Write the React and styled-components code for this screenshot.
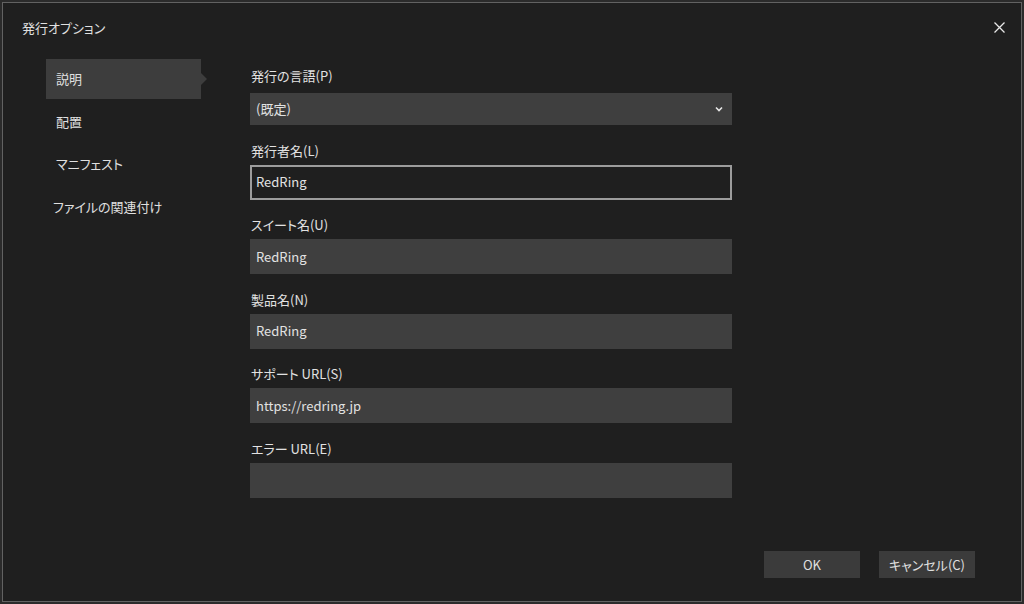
import React from "react"
import styled, { createGlobalStyle } from "styled-components"

const GlobalStyle = createGlobalStyle`
  html, body {
    margin: 0;
    padding: 0;
    background: #2b2b2b;
  }
  body {
    font-family: "Noto Sans CJK JP", "Noto Sans", sans-serif;
    font-size: 13px;
    font-feature-settings: "palt";
  }
`

const Dialog = styled.div`
  box-sizing: border-box;
  width: 1020px;
  height: 600px;
  margin: 2px;
  border: 1px solid #626262;
  background: #1f1f1f;
  color: #e4e4e4;
  display: flex;
  flex-direction: column;
`

const Header = styled.div`
  height: 49px;
  padding: 0 16px 1px 19px;
  display: flex;
  align-items: center;
  justify-content: space-between;
  flex-shrink: 0;
`

const Title = styled.div`
  font-size: 13px;
  color: #e0e0e0;
`

const CloseButton = styled.button`
  border: none;
  background: none;
  padding: 0;
  width: 11px;
  height: 11px;
  display: flex;
  align-items: center;
  justify-content: center;
  cursor: pointer;
`

const Body = styled.div`
  display: flex;
  flex: 1;
`

const Nav = styled.nav`
  padding: 6px 0 0 43px;
  display: flex;
  flex-direction: column;
  gap: 2.5px;
  width: 155px;
`

const NavItem = styled.div`
  position: relative;
  height: 40px;
  padding-left: ${({ indent }) => indent || 10}px;
  padding-bottom: 1px;
  box-sizing: border-box;
  display: flex;
  align-items: center;
  color: #e0e0e0;
  background: ${({ active }) => (active ? "#3d3d3d" : "transparent")};

  &::after {
    content: "";
    display: ${({ active }) => (active ? "block" : "none")};
    position: absolute;
    right: -6px;
    top: 14px;
    border-left: 6px solid #3d3d3d;
    border-top: 6px solid transparent;
    border-bottom: 6px solid transparent;
  }
`

const Form = styled.div`
  margin-left: 49px;
  width: 482px;
  padding-top: 13px;
  display: flex;
  flex-direction: column;
  gap: 15.5px;
`

const Field = styled.div`
  display: flex;
  flex-direction: column;
`

const Label = styled.label`
  line-height: 20px;
  margin-bottom: ${({ gap }) => gap}px;
  padding-left: 1px;
  color: #e2e2e2;
`

const Select = styled.div`
  box-sizing: border-box;
  height: 32px;
  padding: 0 9px 1px 6px;
  background: #3f3f3f;
  display: flex;
  align-items: center;
  justify-content: space-between;
  color: #e2e2e2;
`

const Input = styled.div`
  box-sizing: border-box;
  height: 35px;
  padding-left: ${({ focused }) => (focused ? 4 : 6)}px;
  padding-bottom: 1px;
  background: ${({ focused }) => (focused ? "#1f1f1f" : "#3f3f3f")};
  border: ${({ focused }) => (focused ? "2px solid #9c9c9c" : "none")};
  display: flex;
  align-items: center;
  color: #e2e2e2;
`

const Footer = styled.div`
  display: flex;
  justify-content: flex-end;
  gap: 19px;
  padding: 0 46px 23px 0;
`

const Button = styled.button`
  width: 96px;
  height: 27px;
  border: none;
  background: #3b3b3b;
  color: #e0e0e0;
  font-family: inherit;
  font-size: 13px;
  font-feature-settings: "palt";
  padding: 0 0 1px;
`

const navItems = ["説明", "配置", "マニフェスト", "ファイルの関連付け"]

const fields = [
  { label: "発行者名(L)", value: "RedRing", focused: true },
  { label: "スイート名(U)", value: "RedRing" },
  { label: "製品名(N)", value: "RedRing" },
  { label: "サポート URL(S)", value: "https://redring.jp" },
  { label: "エラー URL(E)", value: "" },
]

const Chevron = () => (
  <svg width="8" height="6" viewBox="0 0 8 6">
    <path d="M1 1.5 L4 4.5 L7 1.5" fill="none" stroke="#e8e8e8" strokeWidth="1.6" />
  </svg>
)

const CloseIcon = () => (
  <svg width="11" height="11" viewBox="0 0 11 11">
    <path d="M0.5 0.5 L10.5 10.5 M10.5 0.5 L0.5 10.5" stroke="#e8e8e8" strokeWidth="1.3" />
  </svg>
)

const App = () => (
  <>
    <GlobalStyle />
    <Dialog>
      <Header>
        <Title>発行オプション</Title>
        <CloseButton>
          <CloseIcon />
        </CloseButton>
      </Header>
      <Body>
        <Nav>
          {navItems.map((text, i) => (
            <NavItem key={text} active={i === 0} indent={i === 3 ? 7 : 10}>
              {text}
            </NavItem>
          ))}
        </Nav>
        <Form>
          <Field>
            <Label gap={7}>発行の言語(P)</Label>
            <Select>
              <span>(既定)</span>
              <Chevron />
            </Select>
          </Field>
          {fields.map(({ label, value, focused }) => (
            <Field key={label}>
              <Label gap={4}>{label}</Label>
              <Input focused={focused}>{value}</Input>
            </Field>
          ))}
        </Form>
      </Body>
      <Footer>
        <Button>OK</Button>
        <Button>キャンセル(C)</Button>
      </Footer>
    </Dialog>
  </>
)

export default App
